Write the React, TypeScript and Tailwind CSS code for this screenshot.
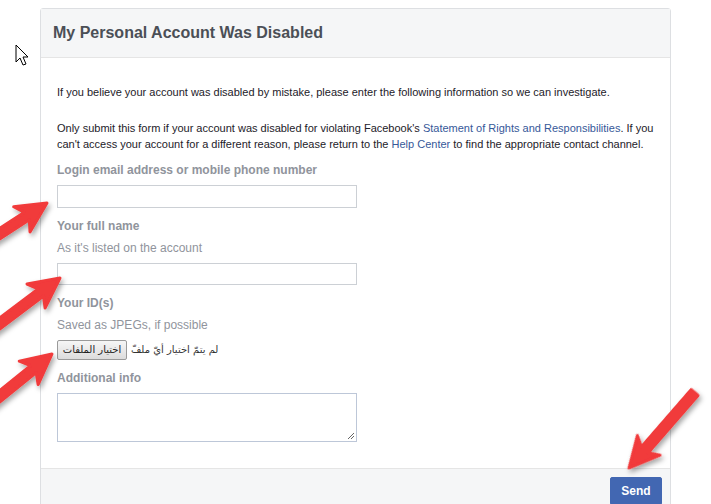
import React from "react";

function Arrow({ x, y, angle, len }: { x: number; y: number; angle: number; len: number }) {
  const hl = 30;
  const hw = 15;
  const sw = 4.5;
  const d = `M0 0 L${-hl} ${-hw} L${-hl + 6} ${-sw} L${-len} ${-sw} L${-len} ${sw} L${-hl + 6} ${sw} L${-hl} ${hw} Z`;
  return (
    <g transform={`translate(${x} ${y}) rotate(${angle})`}>
      <path d={d} fill="#f13a3b" stroke="#f13a3b" strokeWidth="3" strokeLinejoin="round" />
    </g>
  );
}

export default function App() {
  const font = { fontFamily: '"Liberation Sans", Arial, "DejaVu Sans", sans-serif' };
  return (
    <div className="relative w-[711px] h-[504px] overflow-hidden bg-white" style={font}>
      <div className="ml-[40px] mt-[8px] w-[631px] border border-[#dddfe2] rounded-t-[3px] bg-white">
        <div className="h-[49px] bg-[#f5f6f7] border-b border-[#e5e5e5] flex items-center pl-[12px]">
          <h1 className="text-[16px] font-bold text-[#4b4f56] leading-[20px]">My Personal Account Was Disabled</h1>
        </div>
        <div className="pl-[16px] pr-[6px] pt-[26px] pb-[26px] text-[12px] leading-[16px]">
          <p className="text-[#1d2129] text-[11px]">
            If you believe your account was disabled by mistake, please enter the following information so we can investigate.
          </p>
          <p className="text-[#1d2129] text-[11px] mt-[20px]">
            Only submit this form if your account was disabled for violating Facebook's{" "}
            <span className="text-[#365899]">Statement of Rights and Responsibilities</span>. If you
            <br />
            can't access your account for a different reason, please return to the{" "}
            <span className="text-[#365899]">Help Center</span> to find the appropriate contact channel.
          </p>
          <div className="mt-[10px] font-bold text-[#90949c]">Login email address or mobile phone number</div>
          <div className="mt-[7px] w-[300px] h-[23px] border border-[#ccd0d5] bg-white" />
          <div className="mt-[10px] font-bold text-[#90949c]">Your full name</div>
          <div className="mt-[6px] text-[#90949c]">As it's listed on the account</div>
          <div className="mt-[7px] w-[300px] h-[22px] border border-[#ccd0d5] bg-white" />
          <div className="mt-[10px] font-bold text-[#90949c]">Your ID(s)</div>
          <div className="mt-[6px] text-[#90949c]">Saved as JPEGs, if possible</div>
          <div className="mt-[7px] flex items-center gap-[4px] h-[20px]">
            <div
              className="h-[20px] w-[70px] flex items-center justify-center border border-[#9a9a9a] rounded-[2px] bg-gradient-to-b from-[#f6f6f6] to-[#dcdcdc] text-[10px] text-[#222]"
              style={{ fontFamily: '"DejaVu Sans", sans-serif' }}
              dir="rtl"
            >
              اختيار الملفات
            </div>
            <div className="text-[10px] text-[#333]" style={{ fontFamily: '"DejaVu Sans", sans-serif' }} dir="rtl">
              لم يتمّ اختيار أيّ ملفّ
            </div>
          </div>
          <div className="mt-[10px] font-bold text-[#90949c]">Additional info</div>
          <div className="relative mt-[7px] w-[300px] h-[49px] border border-[#bdc7d8] bg-white">
            <svg className="absolute right-[1px] bottom-[1px]" width="8" height="8" viewBox="0 0 8 8">
              <path d="M7 1 L1 7 M7 4 L4 7" stroke="#666" strokeWidth="1" />
            </svg>
          </div>
        </div>
        <div className="h-[60px] bg-[#f5f6f7] border-t border-[#e5e5e5] flex justify-end pr-[8px] pt-[8px]">
          <div className="h-[28px] w-[52px] bg-[#4267b2] border border-[#4267b2] rounded-[2px] flex items-center justify-center text-white font-bold text-[12px]">
            Send
          </div>
        </div>
      </div>

      <svg className="absolute left-0 top-0 pointer-events-none" width="711" height="504" viewBox="0 0 711 504">
        <defs>
          <filter id="sh" x="-20%" y="-20%" width="140%" height="140%">
            <feDropShadow dx="2" dy="3" stdDeviation="2.5" floodColor="#000" floodOpacity="0.35" />
          </filter>
        </defs>
        <g filter="url(#sh)">
          <Arrow x={47} y={203} angle={-33} len={80} />
          <Arrow x={60} y={278} angle={-37} len={110} />
          <Arrow x={52} y={354} angle={-39} len={100} />
          <Arrow x={629} y={468} angle={131} len={100} />
        </g>
        <path
          d="M16 45 L16 62 L20 58 L23 65 L26 64 L23 57 L28 57 Z"
          fill="#fff"
          stroke="#000"
          strokeWidth="1"
          strokeLinejoin="round"
        />
      </svg>
    </div>
  );
}
